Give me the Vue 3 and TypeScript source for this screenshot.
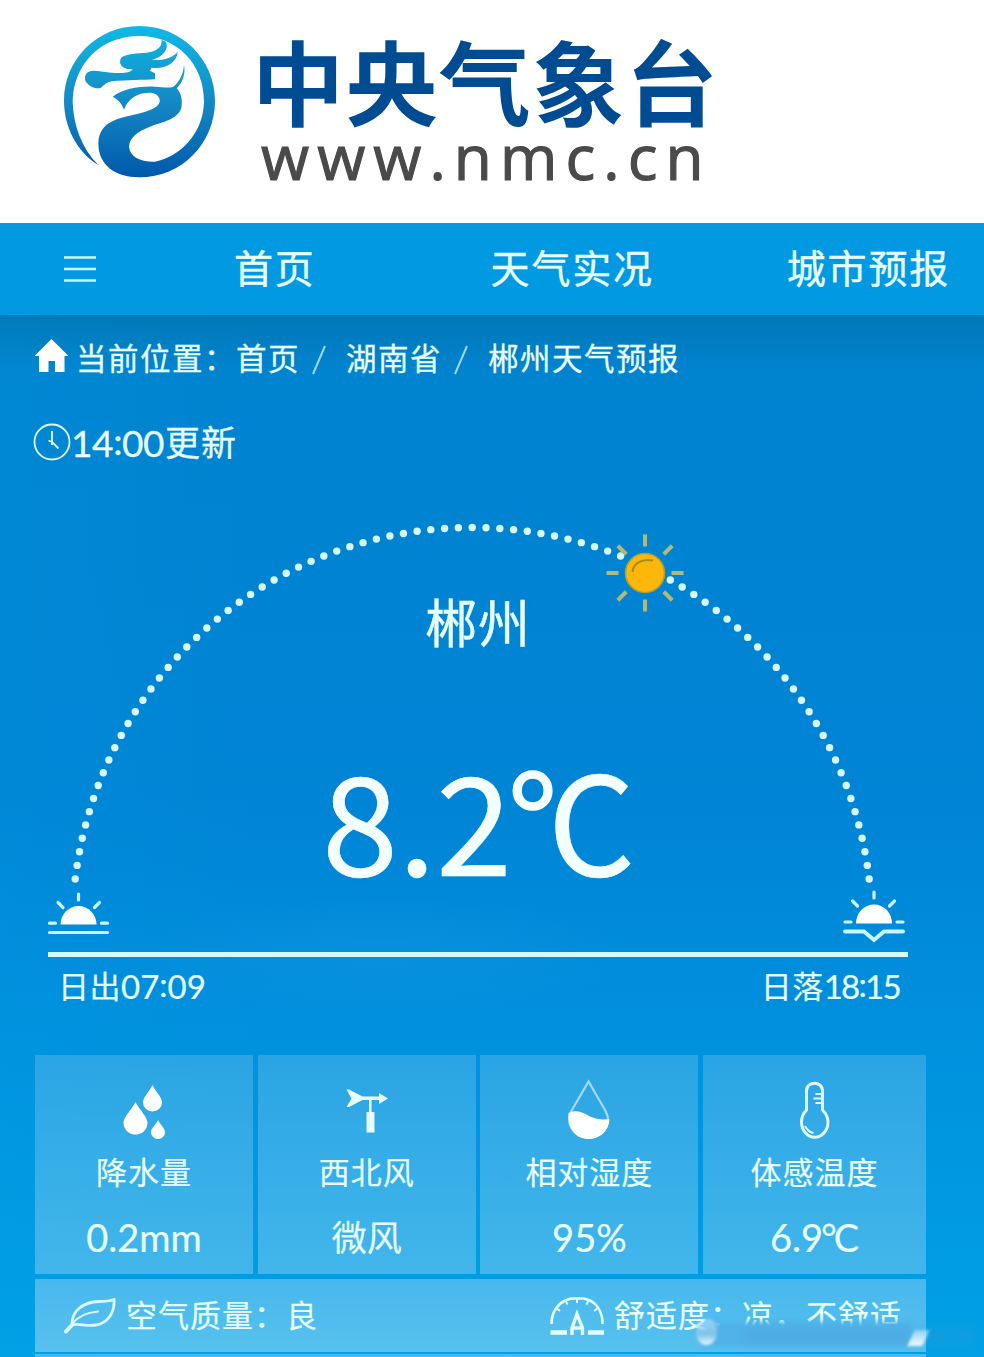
<script setup lang="ts">
interface Dot {
  x: number
  y: number
}

interface Tile {
  icon: 'rain' | 'wind' | 'humidity' | 'thermo'
  label: string
  value: string
  unit?: string
  cjk?: boolean
}

const navItems: string[] = ['首页', '天气实况', '城市预报']
const crumbs: string[] = ['首页', '湖南省', '郴州天气预报']

const tiles: Tile[] = [
  { icon: 'rain', label: '降水量', value: '0.2mm' },
  { icon: 'wind', label: '西北风', value: '微风', cjk: true },
  { icon: 'humidity', label: '相对湿度', value: '95%' },
  { icon: 'thermo', label: '体感温度', value: '6.9', unit: '°C' },
]

// Sun path: evenly spaced dots on an arc, with a gap where the sun sits.
const dots: Dot[] = []
const START = 6.83
const STEP = (180 - 2 * START) / 84
for (let i = 0; i <= 84; i++) {
  if (i >= 54 && i <= 56) continue
  const a = ((START + i * STEP) * Math.PI) / 180
  dots.push({ x: 472.2 - 399.8 * Math.cos(a), y: 436.5 - 399 * Math.sin(a) })
}
const rays: number[] = [0, 45, 90, 135, 180, 225, 270, 315]
</script>

<template>
  <div class="page">
    <header class="brand">
      <svg class="logo" viewBox="60 36 480 480">
        <defs>
          <linearGradient id="lg" x1="0" y1="48" x2="0" y2="502" gradientUnits="userSpaceOnUse">
            <stop offset="0" stop-color="#10b9e6" />
            <stop offset="0.5" stop-color="#1489c4" />
            <stop offset="1" stop-color="#0058ab" />
          </linearGradient>
        </defs>
        <path
          fill="url(#lg)"
          d="M175 465C110 425 72 350 72 272C72 148 172 48 298 48C424 48 525 148 525 272C525 400 425 502 298 502C225 502 175 465 175 400C178 330 240 325 300 310C345 298 365 285 358 265C350 245 320 245 295 254C272 264 258 280 252 300C248 285 235 268 218 260C250 235 300 228 345 230C370 232 385 235 400 230C420 215 430 190 432 165C438 195 425 220 410 235C425 250 428 275 424 295C410 330 370 335 330 350C290 365 268 385 267 410C270 440 300 456 345 455C420 440 490 370 492 275C492 160 410 78 298 78C180 78 100 165 98 275C100 345 125 415 175 465Z"
        />
        <path
          fill="url(#lg)"
          d="M365 90C366 112 350 124 320 128C290 131 262 130 245 142C235 155 240 172 262 177L278 178C272 187 258 189 240 189C210 190 190 183 160 182C140 183 132 195 136 212C145 228 165 238 182 234C192 225 200 217 215 214C260 210 310 210 345 208L345 190L330 182L335 173C380 178 412 155 413 125C400 143 370 152 335 150C365 142 388 120 378 95Z"
        />
      </svg>
      <div class="brand-text">
        <div class="brand-name">中央气象台</div>
        <div class="brand-url">www.nmc.cn</div>
      </div>
    </header>

    <nav class="nav">
      <svg class="burger" viewBox="0 0 32 28">
        <path d="M0 2.500H32M0 14H32M0 25.500H32" stroke="#c9fbff" stroke-width="2.400" />
      </svg>
      <a v-for="item in navItems" :key="item" class="nav-item">{{ item }}</a>
    </nav>

    <main class="main">
      <div class="crumbs">
        <svg class="home" viewBox="0 0 33 33">
          <path d="M16.500 0L33 16.500V17H29.500V33H20V22H13.500V33H4V17H0V16.500Z" fill="#fff" />
        </svg>
        <span class="crumb-label">当前位置：</span>
        <template v-for="(c, i) in crumbs" :key="c">
          <svg v-if="i > 0" class="slash" viewBox="0 0 14 30">
            <path d="M1 29L13 1" stroke="#9fd4f5" stroke-width="2" />
          </svg>
          <span class="crumb">{{ c }}</span>
        </template>
      </div>

      <div class="update">
        <svg class="clock" viewBox="0 0 38 38">
          <circle cx="19" cy="19" r="17.500" fill="none" stroke="#dffcff" stroke-width="1.800" />
          <path d="M19 8V19L25.500 25.500M15.500 17.500L19 19V22" fill="none" stroke="#dffcff" stroke-width="1.800" />
        </svg>
        <span class="update-time">14<span class="colon">:</span>00</span><span class="update-word">更新</span>
      </div>

      <section class="stage">
        <svg class="arc" viewBox="0 0 984 480">
          <circle v-for="(d, i) in dots" :key="i" :cx="d.x" :cy="d.y" r="3.700" fill="#d6f8ff" />
          <g transform="translate(645 83)">
            <path
              v-for="r in rays"
              :key="r"
              d="M0 -26.500V-38.500"
              :transform="`rotate(${r})`"
              stroke="#b3b873"
              stroke-width="4"
            />
            <circle r="19.500" fill="#fdb60a" stroke="#b0a02c" stroke-width="1.600" />
            <path d="M-12.500 -1C-12 -9 -4 -15 8 -12.500" fill="none" stroke="#a98a1c" stroke-width="2" />
          </g>
          <g stroke="#c8f7ff" stroke-width="3.200" stroke-linecap="round">
            <g transform="translate(78.500 434)">
              <path d="M-18 0.500A18 18.500 0 0 1 18 0.500Z" fill="#fff" stroke="none" />
              <path d="M0 -30V-24M-20.500 -21.500L-15.500 -16.500M21 -21.500L16 -16.500M-29 -0.800H-23M23 -0.800H29M-29 8.500H29" fill="none" />
            </g>
            <g transform="translate(874 432.500)">
              <path d="M-18 1A18 19 0 0 1 18 1Z" fill="#fff" stroke="none" />
              <path d="M0 -30.500V-24.500M-21.500 -21.500L-16.500 -16.500M20.500 -21.500L15.500 -16.500M-29 -0.500H-23M23 -0.500H29" fill="none" />
              <path d="M-29 9H-10L0 17.500L10 9H29" fill="none" stroke-width="4" />
            </g>
          </g>
          <path d="M48 464.500H908" stroke="#d3faff" stroke-width="5" />
        </svg>
        <div class="reading">
          <div class="city">郴州</div>
          <div class="temp">8.2<span class="deg">°</span><span class="cel">C</span></div>
        </div>
      </section>

      <div class="times">
        <span class="time"><span class="cj">日出</span>07<span class="colon">:</span>09</span>
        <span class="time set"><span class="cj">日落</span>18<span class="colon">:</span>15</span>
      </div>

      <div class="tiles">
        <div v-for="t in tiles" :key="t.label" class="tile">
          <svg v-if="t.icon === 'rain'" class="icon" viewBox="0 0 60 66">
            <g fill="#fff">
              <path d="M38.500 7C41.500 13.500 48 19 48 24.500A9.500 9 0 0 1 29 24.500C29 19 35.500 13.500 38.500 7Z" />
              <path d="M21.500 24C25.500 32 33.500 39 33.500 45A12 11.500 0 0 1 9.500 45C9.500 39 17.500 32 21.500 24Z" />
              <path d="M44 42C46 46.500 51 50 51 54.500A7 6.500 0 0 1 37 54.500C37 50 42 46.500 44 42Z" />
            </g>
          </svg>
          <svg v-else-if="t.icon === 'wind'" class="icon" viewBox="0 0 60 66">
            <path d="M9.500 11.500H12L25.500 18.500H42V15L51 20.500L42 26V22H34.500V34H37.500V54.500H29.500V34H32V22H25.500L12 29H9.500L14.500 20.500Z" fill="#e9ffff" />
          </svg>
          <svg v-else-if="t.icon === 'humidity'" class="icon" viewBox="0 0 60 66">
            <path d="M29.500 3.500L13 32C11 36 10 38 10 41A19.500 18.500 0 0 0 49 41C49 38 48 36 46 32Z" fill="none" stroke="#a5daf7" stroke-width="2.200" />
            <path d="M9.500 35C18 31 25 35 31 38.500C37 41 43 42 50.500 41C50 53 41 61 29.500 61C18 61 8.500 52 9.500 35Z" fill="#fff" />
          </svg>
          <svg v-else class="icon" viewBox="0 0 60 66">
            <g fill="none" stroke="#dffcff" stroke-width="3">
              <path d="M21.500 32V13C21.500 2.500 37.500 2.500 37.500 13V32C41 35.500 43 38.500 43 44A13 15 0 0 1 16.500 44C16.500 38.500 18 35.500 21.500 32Z" />
              <path d="M30.500 16H37M28.500 20.500H37M30.500 25H37" stroke-width="2" />
              <path d="M20 48C22 52 25 54.500 28.500 55" stroke-width="2" />
            </g>
          </svg>
          <div class="tile-label">{{ t.label }}</div>
          <div class="tile-value" :class="{ cj: t.cjk }">{{ t.value }}<span v-if="t.unit" class="unit">{{ t.unit }}</span></div>
        </div>
      </div>

      <div class="row">
        <div class="air">
          <svg class="leaf" viewBox="0 0 52 36">
            <g fill="none" stroke="#d9f8ff" stroke-linecap="round">
              <path d="M8 26C8 12 20 4 35 3.500C42 3.500 46 3 50 1.500C51 14 44 25 32 27C22 28.500 14 25 8 27" stroke-width="2.800" />
              <path d="M8 26C14 18 22 14.500 34 13.500" stroke-width="2.200" />
              <path d="M2 33.500L8 27" stroke-width="4" />
            </g>
          </svg>
          <span class="row-text">空气质量：良</span>
        </div>
        <div class="comfort">
          <svg class="meter" viewBox="0 0 54 38">
            <g fill="none" stroke="#e2fbff">
              <path d="M1.500 27C1.500 15 8 7 15 3.500L21 1.500H34L40 3.500C47 7 52.500 15 52.500 27" stroke-width="2.600" />
              <path d="M6 11L10 14M15.500 3.500L17.500 7.500M27 1.500V6M38.500 3.500L36.500 7.500M48 11L44 14" stroke-width="2" />
              <path d="M0.500 35.500H17M38 35.500H54" stroke-width="4.600" />
              <path d="M22 38V31L27 17L32.500 31V38M23 31H31" stroke-width="3.400" />
            </g>
          </svg>
          <span class="row-text">舒适度：凉，不舒适</span>
        </div>
        <div class="smudge">
          <i class="veil"></i><i class="shade"></i><i class="blob left"></i><i class="blob right"></i>
        </div>
      </div>
      <div class="row next"></div>
    </main>
  </div>
</template>

<style>
html,
body {
  margin: 0;
  overflow: hidden;
}
</style>

<style scoped>
.page {
  width: 984px;
  height: 1357px;
  overflow: hidden;
  display: flex;
  flex-direction: column;
  background: #fff;
  color: #e6ffff;
  font-family: Lato, 'Noto Sans CJK SC', sans-serif;
}
.brand {
  height: 223px;
  flex: none;
  display: flex;
  align-items: flex-start;
  padding: 22px 0 0 60px;
  box-sizing: border-box;
}
.logo {
  width: 160px;
  height: 160px;
}
.brand-text {
  margin: 11px 0 0 32px;
}
.brand-name {
  height: 92px;
  font: 700 92px/92px 'Noto Sans CJK SC', sans-serif;
  letter-spacing: 1.4px;
  color: #004c93;
  white-space: nowrap;
}
.brand-url {
  margin: 0 0 0 9px;
  font: 500 62px/62px 'Open Sans', sans-serif;
  letter-spacing: 8.1px;
  color: #4a4a4a;
  -webkit-text-stroke: 1.2px currentColor;
}
.nav {
  flex: none;
  height: 92px;
  display: flex;
  align-items: center;
  background: #0099e2;
  padding-left: 64px;
}
.burger {
  width: 32px;
  height: 28px;
}
.nav-item {
  font: 400 39px/60px 'Noto Sans CJK SC', sans-serif;
  letter-spacing: 1.8px;
  white-space: nowrap;
  padding-bottom: 7px;
  -webkit-text-stroke: 0.4px currentColor;
}
.nav-item:nth-of-type(1) {
  margin-left: 138px;
}
.nav-item:nth-of-type(2) {
  margin-left: 175px;
}
.nav-item:nth-of-type(3) {
  margin-left: 133px;
}
.main {
  flex: 1;
  background:
    linear-gradient(rgba(0, 90, 110, 0.26), rgba(0, 90, 110, 0) 55px),
    radial-gradient(ellipse 260px 60px at 380px 640px, rgba(60, 170, 235, 0.14), transparent),
    linear-gradient(90deg, rgba(0, 160, 230, 0.16), transparent 260px),
    linear-gradient(#0083cf 0, #0083d2 250px, #0084d5 480px, #008cdb 640px, #0092de 740px, #00a1e6 1042px);
}
.crumbs {
  display: flex;
  align-items: center;
  height: 46px;
  padding: 20px 0 0 35px;
  font: 400 30.5px/46px 'Noto Sans CJK SC', sans-serif;
  letter-spacing: 1.5px;
  white-space: nowrap;
  -webkit-text-stroke: 0.3px currentColor;
}
.home {
  width: 33px;
  height: 33px;
  margin: -5px 8px 0 0;
}
.crumb,
.crumb-label {
  margin-top: -2px;
}
.slash {
  width: 14px;
  height: 30px;
  margin: 3px 20px 0 12px;
}
.update {
  display: flex;
  align-items: center;
  height: 50px;
  margin-top: 36px;
  padding-left: 33px;
  white-space: nowrap;
  -webkit-text-stroke: 0.3px currentColor;
}
.clock {
  width: 38px;
  height: 38px;
}
.colon {
  position: relative;
  top: -2px;
}
.update-time {
  font: 400 37px/50px Lato, sans-serif;
  letter-spacing: -0.4px;
  margin-top: 2px;
}
.update-word {
  font: 400 35px/50px 'Noto Sans CJK SC', sans-serif;
  letter-spacing: 1px;
  margin: -2px 0 0 1px;
}
.stage {
  display: grid;
  height: 480px;
  margin-top: 23px;
}
.arc,
.reading {
  grid-area: 1 / 1;
}
.arc {
  width: 984px;
  height: 480px;
}
.reading {
  display: flex;
  flex-direction: column;
}
.city {
  margin: 91px 0 0 425px;
  font: 400 52px/80px 'Noto Sans CJK SC', sans-serif;
  letter-spacing: 1px;
  -webkit-text-stroke: 0.4px currentColor;
}
.temp {
  margin: 75px 0 0 322px;
  font: 400 137px/160px 'Noto Sans CJK SC', sans-serif;
  color: #f4ffff;
  white-space: nowrap;
  -webkit-text-stroke: 0.6px currentColor;
}
.temp .deg {
  margin-left: -5px;
  -webkit-text-stroke: 1.6px currentColor;
}
.temp .cel {
  margin-left: -10px;
}
.times {
  display: flex;
  justify-content: space-between;
  width: 842px;
  margin-left: 58px;
  height: 50px;
  margin-top: -9px;
}
.time {
  font-size: 33px;
  line-height: 50px;
  white-space: nowrap;
  -webkit-text-stroke: 0.2px currentColor;
}
.time.set {
  letter-spacing: -1.7px;
}
.time .cj {
  font: 400 31px/50px 'Noto Sans CJK SC', sans-serif;
  letter-spacing: 0.5px;
  position: relative;
  top: -1px;
}
.tiles {
  display: grid;
  grid-template-columns: 218px 218px 218px 223px;
  column-gap: 4.7px;
  margin: 44px 0 0 35px;
}
.tile {
  height: 219px;
  display: flex;
  flex-direction: column;
  align-items: center;
  background: linear-gradient(rgba(255, 255, 255, 0.165), rgba(255, 255, 255, 0.26));
  -webkit-text-stroke: 0.2px currentColor;
}
.icon {
  width: 60px;
  height: 66px;
  margin-top: 23px;
}
.tile-label {
  font: 400 31px/48px 'Noto Sans CJK SC', sans-serif;
  letter-spacing: 1px;
  margin-top: 3px;
}
.tile-value {
  font-size: 38px;
  line-height: 52px;
  margin-top: 16px;
}
.tile-value.cj {
  font: 400 35px/52px 'Noto Sans CJK SC', sans-serif;
  margin-top: 15px;
}
.unit {
  letter-spacing: -3px;
  margin: 0 3px 0 -2px;
}
.row {
  position: relative;
  display: flex;
  width: 891px;
  height: 73px;
  margin: 5px 0 0 35px;
  background: linear-gradient(rgba(255, 255, 255, 0.28), rgba(255, 255, 255, 0.34));
}
.row.next {
  margin-top: 2px;
}
.air,
.comfort {
  display: flex;
  align-items: center;
}
.air {
  width: 515px;
  padding-left: 29px;
  box-sizing: border-box;
}
.leaf {
  width: 52px;
  height: 36px;
}
.meter {
  width: 54px;
  height: 38px;
}
.row-text {
  margin: -4px 0 0 10px;
  font: 400 31px/50px 'Noto Sans CJK SC', sans-serif;
  letter-spacing: 1px;
  white-space: nowrap;
  -webkit-text-stroke: 0.2px currentColor;
}
.smudge {
  position: absolute;
  left: 650px;
  top: 30px;
  width: 300px;
  height: 40px;
}
.smudge i {
  position: absolute;
  display: block;
}
.veil {
  left: 20px;
  top: 13px;
  width: 206px;
  height: 25px;
  background: #50b2e9;
  filter: blur(2.5px);
}
.shade {
  left: 60px;
  top: 18px;
  width: 230px;
  height: 18px;
  background: rgba(70, 150, 205, 0.2);
  filter: blur(5px);
}
.blob.left {
  left: 11px;
  top: 10px;
  width: 21px;
  height: 26px;
  border-radius: 40% 40% 50% 50%;
  background: linear-gradient(rgba(210, 240, 255, 0.5), #7fc3ea 60%, #effaff);
  filter: blur(1.5px);
}
.blob.right {
  left: 226px;
  top: 21px;
  width: 15px;
  height: 16px;
  transform: skewX(-24deg);
  background: linear-gradient(rgba(200, 235, 255, 0.5), #f2fbff);
  filter: blur(1.5px);
}
</style>
